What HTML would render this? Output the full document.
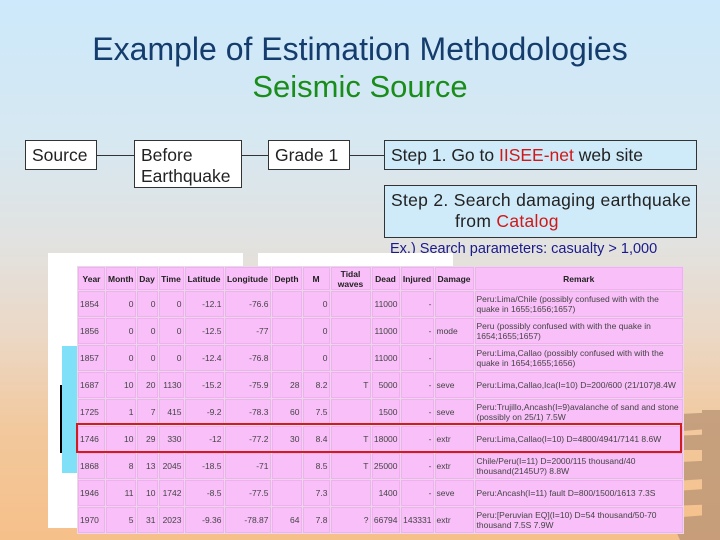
<!DOCTYPE html>
<html><head><meta charset="utf-8"><style>
*{margin:0;padding:0;box-sizing:border-box}
body{width:720px;height:540px;overflow:hidden;position:relative;font-family:"Liberation Sans",Arial,sans-serif;
background:linear-gradient(to bottom,#cde9fb 0%,#d6e8f2 25%,#e2e2e0 45%,#ebd8c6 62%,#f2c89c 80%,#f6c08a 100%);}
.abs{position:absolute}
.box{position:absolute;border:1px solid #333;background:#fff;font-size:17.5px;color:#222;padding:4px 6px;line-height:21px;white-space:nowrap}
.blue{background:#cfeaf8}
.red{color:#d01818}
.line{position:absolute;height:1px;background:#333}
table{position:absolute;left:77px;top:266px;width:607px;border-collapse:collapse;background:#f8bff8;font-size:8.5px;color:#444;font-family:"Liberation Sans",sans-serif}
td,th{border:1px solid #e8d8e8;box-shadow:inset 0 0 0 1px #f0b0f0;height:27px;padding:0 2px;text-align:right}
th{height:24px;text-align:center;color:#222;font-size:8.5px}
td.l{text-align:left}
</style></head><body>
<svg class="abs" style="left:640px;top:400px" width="80" height="140" viewBox="0 0 80 140">
<g fill="#b89374" opacity="0.75">
<polygon points="10,20 40,14 80,12 80,28 30,32"/>
<polygon points="30,36 80,34 80,50 40,50"/>
<polygon points="0,70 40,62 80,60 80,78 20,82"/>
<polygon points="20,92 80,88 80,104 30,106"/>
<polygon points="30,118 80,114 80,140 40,140"/>
<rect x="62" y="10" width="18" height="130"/>
</g></svg>
<div class="abs" style="left:0;top:29px;width:720px;text-align:center;font-size:32px;line-height:40px;color:#143c6c">Example of Estimation Methodologies</div>
<div class="abs" style="left:0;top:67px;width:720px;text-align:center;font-size:31px;line-height:40px;color:#1a8c1a">Seismic Source</div>

<div class="line" style="left:97px;top:155px;width:37px"></div>
<div class="line" style="left:242px;top:155px;width:26px"></div>
<div class="line" style="left:350px;top:155px;width:34px"></div>
<div class="box" style="left:25px;top:140px;width:72px;height:30px">Source</div>
<div class="box" style="left:134px;top:140px;width:108px;height:48px">Before<br>Earthquake</div>
<div class="box" style="left:268px;top:140px;width:82px;height:30px">Grade 1</div>
<div class="box blue" style="left:384px;top:140px;width:313px;height:30px">Step 1. Go to <span class="red">IISEE-net</span> web site</div>
<div class="box blue" style="left:384px;top:185px;width:313px;height:53px;letter-spacing:0.3px">Step 2. Search damaging earthquake<br><span style="padding-left:64px">from <span class="red">Catalog</span></span></div>
<div class="abs" style="left:390px;top:241px;font-size:14.5px;color:#1a1a8c">Ex.) Search parameters: casualty &gt; 1,000</div>

<div class="abs" style="left:48px;top:253px;width:195px;height:275px;background:#fff"></div>
<div class="abs" style="left:258px;top:253px;width:195px;height:20px;background:#fff"></div>
<div class="abs" style="left:62px;top:346px;width:15px;height:127px;background:#80e0f8"></div>
<div class="abs" style="left:60px;top:385px;width:2px;height:68px;background:#000"></div>

<table>
<tr><th style="width:28px">Year</th><th style="width:28px">Month</th><th style="width:22px">Day</th><th style="width:26px">Time</th><th style="width:40px">Latitude</th><th style="width:47px">Longitude</th><th style="width:31px">Depth</th><th style="width:28px">M</th><th style="width:41px">Tidal<br>waves</th><th style="width:29px">Dead</th><th style="width:34px">Injured</th><th style="width:40px">Damage</th><th>Remark</th></tr>
<tr><td class="l">1854</td><td>0</td><td>0</td><td>0</td><td>-12.1</td><td>-76.6</td><td></td><td>0</td><td></td><td>11000</td><td>-</td><td></td><td class="l">Peru:Lima/Chile (possibly confused with with the quake in 1655;1656;1657)</td></tr>
<tr><td class="l">1856</td><td>0</td><td>0</td><td>0</td><td>-12.5</td><td>-77</td><td></td><td>0</td><td></td><td>11000</td><td>-</td><td class="l">mode</td><td class="l">Peru (possibly confused with with the quake in 1654;1655;1657)</td></tr>
<tr><td class="l">1857</td><td>0</td><td>0</td><td>0</td><td>-12.4</td><td>-76.8</td><td></td><td>0</td><td></td><td>11000</td><td>-</td><td></td><td class="l">Peru:Lima,Callao (possibly confused with with the quake in 1654;1655;1656)</td></tr>
<tr><td class="l">1687</td><td>10</td><td>20</td><td>1130</td><td>-15.2</td><td>-75.9</td><td>28</td><td>8.2</td><td>T</td><td>5000</td><td>-</td><td class="l">seve</td><td class="l">Peru:Lima,Callao,Ica(I=10) D=200/600 (21/107)8.4W</td></tr>
<tr><td class="l">1725</td><td>1</td><td>7</td><td>415</td><td>-9.2</td><td>-78.3</td><td>60</td><td>7.5</td><td></td><td>1500</td><td>-</td><td class="l">seve</td><td class="l">Peru:Trujillo,Ancash(I=9)avalanche of sand and stone (possibly on 25/1) 7.5W</td></tr>
<tr><td class="l">1746</td><td>10</td><td>29</td><td>330</td><td>-12</td><td>-77.2</td><td>30</td><td>8.4</td><td>T</td><td>18000</td><td>-</td><td class="l">extr</td><td class="l">Peru:Lima,Callao(I=10) D=4800/4941/7141 8.6W</td></tr>
<tr><td class="l">1868</td><td>8</td><td>13</td><td>2045</td><td>-18.5</td><td>-71</td><td></td><td>8.5</td><td>T</td><td>25000</td><td>-</td><td class="l">extr</td><td class="l">Chile/Peru(I=11) D=2000/115 thousand/40 thousand(2145U?) 8.8W</td></tr>
<tr><td class="l">1946</td><td>11</td><td>10</td><td>1742</td><td>-8.5</td><td>-77.5</td><td></td><td>7.3</td><td></td><td>1400</td><td>-</td><td class="l">seve</td><td class="l">Peru:Ancash(I=11) fault D=800/1500/1613 7.3S</td></tr>
<tr><td class="l">1970</td><td>5</td><td>31</td><td>2023</td><td>-9.36</td><td>-78.87</td><td>64</td><td>7.8</td><td>?</td><td>66794</td><td>143331</td><td class="l">extr</td><td class="l">Peru:[Peruvian EQ](I=10) D=54 thousand/50-70 thousand 7.5S 7.9W</td></tr>
</table>
<div class="abs" style="left:76px;top:423px;width:606px;height:30px;border:2px solid #d01c1c"></div>
</body></html>
